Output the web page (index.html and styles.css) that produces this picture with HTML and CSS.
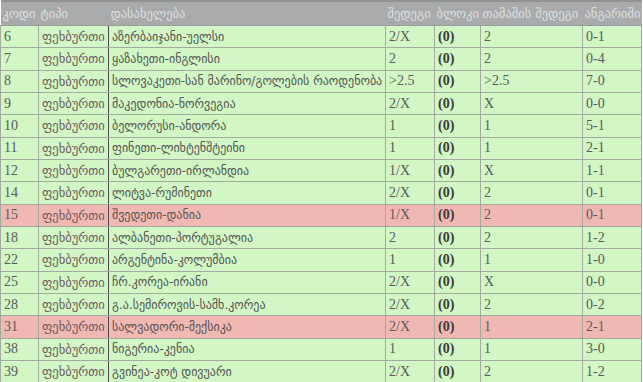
FILE: index.html
```html
<!DOCTYPE html>
<html>
<head>
<meta charset="utf-8">
<link rel="stylesheet" href="styles.css">
</head>
<body>
<table class="bets">
  <colgroup>
    <col class="c-code"><col class="c-type"><col class="c-name"><col class="c-res"><col class="c-block"><col class="c-game"><col class="c-score">
  </colgroup>
  <thead>
    <tr><th>კოდი</th><th>ტიპი</th><th>დასახელება</th><th>შედეგი</th><th>ბლოკი</th><th>თამაშის შედეგი</th><th>ანგარიში</th></tr>
  </thead>
  <tbody>
    <tr class="ok"><td>6</td><td class="sport">ფეხბურთი</td><td>აზერბაიჯანი-უელსი</td><td>2/X</td><td class="blk">(0)</td><td>2</td><td>0-1</td></tr>
    <tr class="ok"><td>7</td><td class="sport">ფეხბურთი</td><td>ყაზახეთი-ინგლისი</td><td>2</td><td class="blk">(0)</td><td>2</td><td>0-4</td></tr>
    <tr class="ok"><td>8</td><td class="sport">ფეხბურთი</td><td>სლოვაკეთი-სან მარინო/გოლების რაოდენობა</td><td>&gt;2.5</td><td class="blk">(0)</td><td>&gt;2.5</td><td>7-0</td></tr>
    <tr class="ok"><td>9</td><td class="sport">ფეხბურთი</td><td>მაკედონია-ნორვეგია</td><td>2/X</td><td class="blk">(0)</td><td>X</td><td>0-0</td></tr>
    <tr class="ok"><td>10</td><td class="sport">ფეხბურთი</td><td>ბელორუსი-ანდორა</td><td>1</td><td class="blk">(0)</td><td>1</td><td>5-1</td></tr>
    <tr class="ok"><td>11</td><td class="sport">ფეხბურთი</td><td>ფინეთი-ლიხტენშტეინი</td><td>1</td><td class="blk">(0)</td><td>1</td><td>2-1</td></tr>
    <tr class="ok"><td>12</td><td class="sport">ფეხბურთი</td><td>ბულგარეთი-ირლანდია</td><td>1/X</td><td class="blk">(0)</td><td>X</td><td>1-1</td></tr>
    <tr class="ok"><td>14</td><td class="sport">ფეხბურთი</td><td>ლიტვა-რუმინეთი</td><td>2/X</td><td class="blk">(0)</td><td>2</td><td>0-1</td></tr>
    <tr class="bad"><td>15</td><td class="sport">ფეხბურთი</td><td>შვედეთი-დანია</td><td>1/X</td><td class="blk">(0)</td><td>2</td><td>0-1</td></tr>
    <tr class="ok"><td>18</td><td class="sport">ფეხბურთი</td><td>ალბანეთი-პორტუგალია</td><td>2</td><td class="blk">(0)</td><td>2</td><td>1-2</td></tr>
    <tr class="ok"><td>22</td><td class="sport">ფეხბურთი</td><td>არგენტინა-კოლუმბია</td><td>1</td><td class="blk">(0)</td><td>1</td><td>1-0</td></tr>
    <tr class="ok"><td>25</td><td class="sport">ფეხბურთი</td><td>ჩრ.კორეა-ირანი</td><td>2/X</td><td class="blk">(0)</td><td>X</td><td>0-0</td></tr>
    <tr class="ok"><td>28</td><td class="sport">ფეხბურთი</td><td>გ.ა.სემიროვის-სამხ.კორეა</td><td>2/X</td><td class="blk">(0)</td><td>2</td><td>0-2</td></tr>
    <tr class="bad"><td>31</td><td class="sport">ფეხბურთი</td><td>სალვადორი-მექსიკა</td><td>2/X</td><td class="blk">(0)</td><td>1</td><td>2-1</td></tr>
    <tr class="ok"><td>38</td><td class="sport">ფეხბურთი</td><td>ნიგერია-კენია</td><td>1</td><td class="blk">(0)</td><td>1</td><td>3-0</td></tr>
    <tr class="ok"><td>39</td><td class="sport">ფეხბურთი</td><td>გვინეა-კოტ დივუარი</td><td>2/X</td><td class="blk">(0)</td><td>2</td><td>1-2</td></tr>
  </tbody>
</table>
</body>
</html>
```
FILE: styles.css
```css
html, body {
  margin: 0;
  padding: 0;
  background: #ffffff;
}
.bets {
  border-collapse: collapse;
  table-layout: fixed;
  width: 641px;
  font-family: "Liberation Serif", "DejaVu Sans", serif;
  font-size: 14px;
  color: #5a5a5a;
}
.c-code { width: 38px; }
.c-type { width: 70px; }
.c-name { width: 277px; }
.c-res { width: 49px; }
.c-block { width: 46px; }
.c-game { width: 102px; }
.c-score { width: 59px; }

.bets th {
  height: 23px;
  padding: 0 0 0 2px;
  background: #a8aaab;
  color: #dfe0e2;
  font-family: "DejaVu Sans", sans-serif;
  font-weight: normal;
  text-align: left;
  white-space: nowrap;
  overflow: visible;
  border-top: 2px solid #8f9192;
  border-bottom: 1px solid #9a9a9a;
  font-size: 12.5px;
}
.bets td {
  height: 21.33px;
  padding: 0 3px;
  border: 1px solid #a3aaa0;
  white-space: nowrap;
  overflow: hidden;
  vertical-align: middle;
}
.bets td:nth-child(2) { border-right-color: #4a4a4a; }
.bets td:nth-child(5) { border-left-color: #4a4a4a; }
.bets tr.ok td { background: #d2f6c4; }
.bets tr.bad td { background: #f1b7b3; }
.bets td.sport {
  color: #6e5a5e;
  font-family: "DejaVu Sans", sans-serif;
  font-size: 12.5px;
}
.bets td:nth-child(3) {
  font-family: "DejaVu Sans", sans-serif;
  font-size: 12px;
  color: #555555;
}
.bets td.blk {
  font-weight: bold;
  color: #3a3a3a;
}
```
